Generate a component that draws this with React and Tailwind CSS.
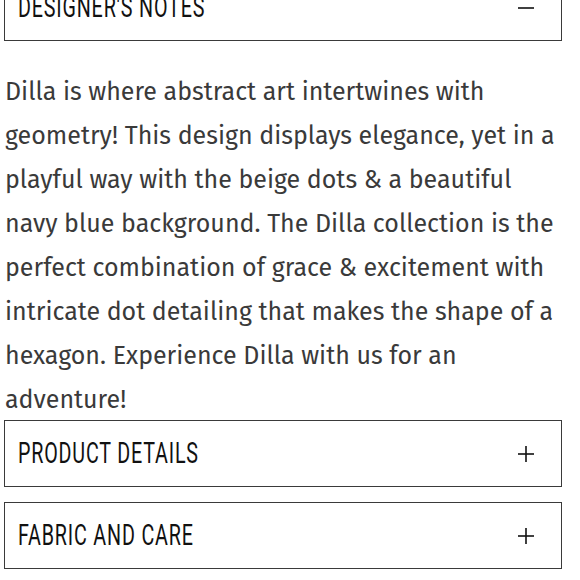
import React, { useState } from 'react';

const headFont = { fontFamily: 'Roboto, "Liberation Sans", sans-serif' };

function Section({ title, open, onToggle }) {
  return (
    <button
      onClick={onToggle}
      className="w-full h-[67px] flex items-center justify-between border-[1.5px] border-[#3a3a3a] pl-[13px] pr-[26px] bg-white text-left"
    >
      <span
        className="inline-block origin-left scale-x-[0.68] text-[29px] leading-none font-normal text-[#111] uppercase tracking-[1.2px] whitespace-nowrap"
        style={headFont}
      >
        {title}
      </span>
      <svg width="18" height="18" viewBox="0 0 18 18" className="text-[#111]">
        <path d="M1 9h16" stroke="currentColor" strokeWidth="1.6" />
        {!open && <path d="M9 1v16" stroke="currentColor" strokeWidth="1.6" />}
      </svg>
    </button>
  );
}

export default function App() {
  const [openKey, setOpenKey] = useState('notes');
  const toggle = (k) => setOpenKey(openKey === k ? null : k);

  return (
    <div className="w-[580px] h-[580px] overflow-hidden bg-white">
      <div className="ml-[4px] w-[558px] -mt-[26px] font-['Fira_Sans','Roboto',sans-serif]">
        <Section title="Designer's Notes" open={openKey === 'notes'} onToggle={() => toggle('notes')} />
        <p className="mt-[29px] -mb-[2px] pl-[1px] text-[25px] leading-[44px] font-normal text-[#3a3a3a]">
          Dilla is where abstract art intertwines with geometry! This design displays elegance, yet in a playful way with the beige dots &amp; a beautiful navy blue background. The Dilla collection is the perfect combination of grace &amp; excitement with intricate dot detailing that makes the shape of a hexagon. Experience Dilla with us for an adventure!
        </p>
        <div className="flex flex-col gap-[15px]">
          <Section title="Product Details" open={openKey === 'details'} onToggle={() => toggle('details')} />
          <Section title="Fabric and Care" open={openKey === 'fabric'} onToggle={() => toggle('fabric')} />
        </div>
      </div>
    </div>
  );
}
